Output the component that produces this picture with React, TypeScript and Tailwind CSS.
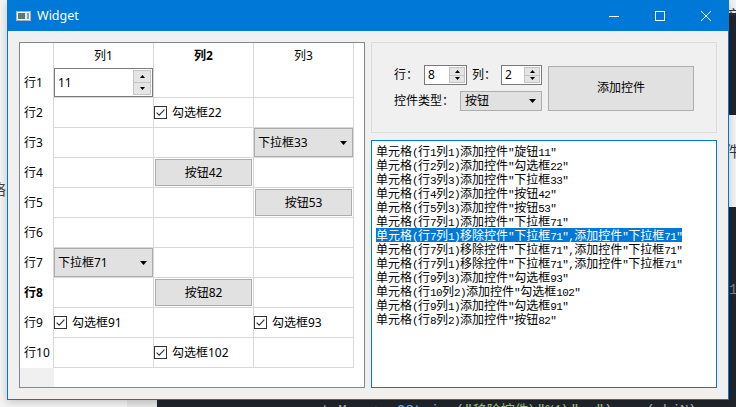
import React from 'react'

const grid = 'border-[#d8d8d8]'

const logLines = [
  '单元格(行1列1)添加控件"旋钮11"',
  '单元格(行2列2)添加控件"勾选框22"',
  '单元格(行3列3)添加控件"下拉框33"',
  '单元格(行4列2)添加控件"按钮42"',
  '单元格(行5列3)添加控件"按钮53"',
  '单元格(行7列1)添加控件"下拉框71"',
  '单元格(行7列1)移除控件"下拉框71",添加控件"下拉框71"',
  '单元格(行7列1)移除控件"下拉框71",添加控件"下拉框71"',
  '单元格(行7列1)移除控件"下拉框71",添加控件"下拉框71"',
  '单元格(行9列3)添加控件"勾选框93"',
  '单元格(行10列2)添加控件"勾选框102"',
  '单元格(行9列1)添加控件"勾选框91"',
  '单元格(行8列2)添加控件"按钮82"',
]

// ASCII runs get a 6px-advance mono face, like the bitmap font in the log
function Mixed({ text }: { text: string }) {
  const parts = text.match(/[\x00-\x7f]+|[^\x00-\x7f]+/g) || []
  return (
    <>
      {parts.map((p, i) =>
        /^[\x00-\x7f]/.test(p) ? (
          <span key={i} className="font-['Liberation_Mono',monospace] text-[11px] tracking-[-0.6px]">
            {p}
          </span>
        ) : (
          <span key={i}>{p}</span>
        )
      )}
    </>
  )
}

function Arrow({ up }: { up?: boolean }) {
  return (
    <svg width="5" height="3" viewBox="0 0 5 3">
      <path d={up ? 'M0 3 L2.5 0 L5 3Z' : 'M0 0 L5 0 L2.5 3Z'} fill="#000" />
    </svg>
  )
}

function DropArrow() {
  return (
    <svg width="7" height="4" viewBox="0 0 7 4">
      <path d="M0 0 L7 0 L3.5 4Z" fill="#000" />
    </svg>
  )
}

function SpinBox({ value, btnW }: { value: string; btnW: string }) {
  return (
    <div className="w-full h-full border border-[#7a7a7a] bg-white flex items-center">
      <span className="pl-[3px] flex-1">{value}</span>
      <div className={`flex flex-col h-full py-[1px] mr-[1px] ${btnW}`}>
        <div className="flex-1 bg-[#e5e5e5] border border-[#c4c4c4] flex items-center justify-center">
          <Arrow up />
        </div>
        <div className="flex-1 bg-[#e5e5e5] border border-[#c4c4c4] border-t-0 flex items-center justify-center">
          <Arrow />
        </div>
      </div>
    </div>
  )
}

function Combo({ label, pl }: { label: string; pl: string }) {
  return (
    <div className={`w-full h-full bg-[#e1e1e1] border border-[#adadad] flex items-center justify-between pr-[5px] ${pl}`}>
      <span>{label}</span>
      <DropArrow />
    </div>
  )
}

function Button({ label }: { label: string }) {
  return (
    <div className="m-[1px] w-[97px] h-[27px] bg-[#e1e1e1] border border-[#adadad] flex items-center justify-center">
      {label}
    </div>
  )
}

function Check({ label }: { label: string }) {
  return (
    <div className="flex items-center h-full">
      <svg width="13" height="13" viewBox="0 0 13 13" className="shrink-0">
        <rect x="0.5" y="0.5" width="12" height="12" fill="#fff" stroke="#333" />
        <path d="M2.6 6.6 L5.2 9.2 L10.4 3.6" fill="none" stroke="#333" strokeWidth="1.2" />
      </svg>
      <span className="ml-[5px]">{label}</span>
    </div>
  )
}

const cells: Record<string, React.ReactNode> = {
  '1-1': <SpinBox value="11" btnW="w-[18px]" />,
  '2-2': <Check label="勾选框22" />,
  '3-3': <Combo label="下拉框33" pl="pl-[3px]" />,
  '4-2': <Button label="按钮42" />,
  '5-3': <Button label="按钮53" />,
  '7-1': <Combo label="下拉框71" pl="pl-[3px]" />,
  '8-2': <Button label="按钮82" />,
  '9-1': <Check label="勾选框91" />,
  '9-3': <Check label="勾选框93" />,
  '10-2': <Check label="勾选框102" />,
}

function Table() {
  const rows = [1, 2, 3, 4, 5, 6, 7, 8, 9, 10]
  return (
    <div className="w-[346px] h-[346px] border border-[#828790] bg-white flex flex-col">
      <div className="flex h-[25px]">
        <div className={`w-[34px] border-r ${grid}`} />
        {['列1', '列2', '列3'].map((c, i) => (
          <div
            key={c}
            className={`w-[100px] border-r ${grid} flex items-center justify-center ${i === 1 ? 'font-bold' : ''}`}
          >
            {c}
          </div>
        ))}
      </div>
      {rows.map((r) => (
        <div key={r} className="flex h-[30px]">
          <div className={`w-[34px] border-r ${grid} pl-[4px] flex items-center ${r === 8 ? 'font-bold' : ''}`}>
            行{r}
          </div>
          {[1, 2, 3].map((c) => (
            <div key={c} className={`w-[100px] h-[30px] border-r border-b ${grid}`}>
              {cells[`${r}-${c}`]}
            </div>
          ))}
        </div>
      ))}
      <div className="flex flex-1">
        <div className="w-[34px] bg-[#f0f0f0]" />
        <div className="flex-1" />
      </div>
    </div>
  )
}

function Controls() {
  return (
    <div className="h-[91px] border border-[#dcdcdc] flex items-center pl-[22px] pt-[1px]">
      <div className="flex flex-col gap-[6px]">
        <div className="flex items-center h-[20px]">
          <span className="w-[30px]">行：</span>
          <div className="w-[43px] h-[20px]">
            <SpinBox value="8" btnW="w-[16px]" />
          </div>
          <span className="ml-[5px] w-[29px]">列：</span>
          <div className="w-[41px] h-[20px]">
            <SpinBox value="2" btnW="w-[16px]" />
          </div>
        </div>
        <div className="flex items-center h-[20px]">
          <span className="w-[66px]">控件类型：</span>
          <div className="w-[82px] h-[20px]">
            <Combo label="按钮" pl="pl-[4px]" />
          </div>
        </div>
      </div>
      <div className="ml-[6px] w-[146px] h-[45px] bg-[#e1e1e1] border border-[#adadad] flex items-center justify-center">
        添加控件
      </div>
    </div>
  )
}

function Log() {
  return (
    <div className="flex-1 border border-[#0078d7] bg-white pl-[4px] pt-[3px] font-['Noto_Sans_CJK_SC',sans-serif] text-[12px] text-black">
      {logLines.map((l, i) => (
        <div key={i} className="h-[14px] leading-[14px] whitespace-nowrap">
          <span className={i === 6 ? 'inline-block h-[14px] bg-[#0078d7] text-white' : ''}>
            <Mixed text={l} />
          </span>
        </div>
      ))}
    </div>
  )
}

function TitleBar() {
  return (
    <div className="h-[30px] bg-[#0078d7] flex items-center text-white">
      <svg width="15" height="10" viewBox="0 0 15 10" className="ml-[8px]">
        <rect x="0.5" y="0.5" width="14" height="9" fill="#f4f4f4" stroke="#a8b4b8" />
        <rect x="2" y="2" width="7" height="6" fill="#4f7f76" />
        <rect x="9" y="2" width="2" height="6" fill="#dfe8e6" />
        <rect x="11" y="2" width="2" height="6" fill="#8aa8a2" />
      </svg>
      <span className="ml-[6px] text-[12.5px] font-['Noto_Sans',sans-serif]">Widget</span>
      <div className="ml-auto flex h-full">
        <div className="w-[46px] flex items-center justify-center">
          <div className="w-[10px] h-[1px] bg-white" />
        </div>
        <div className="w-[46px] flex items-center justify-center">
          <div className="w-[10px] h-[10px] border border-white" />
        </div>
        <div className="w-[45px] flex items-center justify-center">
          <svg width="10" height="10" viewBox="0 0 10 10">
            <path d="M0 0 L10 10 M10 0 L0 10" stroke="#fff" strokeWidth="1" />
          </svg>
        </div>
      </div>
    </div>
  )
}

export default function App() {
  return (
    <div className="relative w-[736px] h-[407px] overflow-hidden bg-[#f3f3f3] font-['Noto_Sans','Noto_Sans_CJK_SC',sans-serif] text-[12px] text-black">
      {/* desktop behind the window */}
      <div className="absolute left-[157px] top-[207px] right-0 bottom-0 bg-[#21252b]" />
      <div className="absolute left-[127px] top-[400px] w-[30px] h-[7px] bg-[#e6e6e6]" />
      <div className="absolute left-[728px] top-[13px] w-[8px] h-[102px] bg-[#21252b]" />
      <div className="absolute left-[726px] top-[4px] text-[15px] text-[#333]">产</div>
      <div className="absolute left-[725px] top-[140px] text-[15px] text-[#333]">件</div>
      <div className="absolute left-[729px] top-[280px] text-[14px] text-[#7f848e] font-['Liberation_Mono',monospace]">1</div>
      <div className="absolute left-[-9px] top-[178px] text-[15px] text-[#444]">络</div>
      <div className="absolute left-[313px] top-[401px] text-[14px] whitespace-nowrap font-['Liberation_Mono','Noto_Sans_CJK_SC',monospace]">
        <span className="text-[#abb2bf]">strMsg </span>
        <span className="text-[#56b6c2]">+= </span>
        <span className="text-[#61afef]">QString</span>
        <span className="text-[#abb2bf]">(</span>
        <span className="text-[#98c379]">"移除控件\"%1\", "</span>
        <span className="text-[#abb2bf]">).arg(objN);</span>
      </div>

      <div className="absolute left-[7px] top-0 w-[722px] h-[400px] border border-[#0078d7] bg-[#f0f0f0] shadow-[0_2px_8px_rgba(0,0,0,0.2)] flex flex-col">
        <TitleBar />
        <div className="flex-1 flex p-[11px] gap-[6px]">
          <Table />
          <div className="w-[346px] flex flex-col gap-[7px]">
            <Controls />
            <Log />
          </div>
        </div>
      </div>
    </div>
  )
}
